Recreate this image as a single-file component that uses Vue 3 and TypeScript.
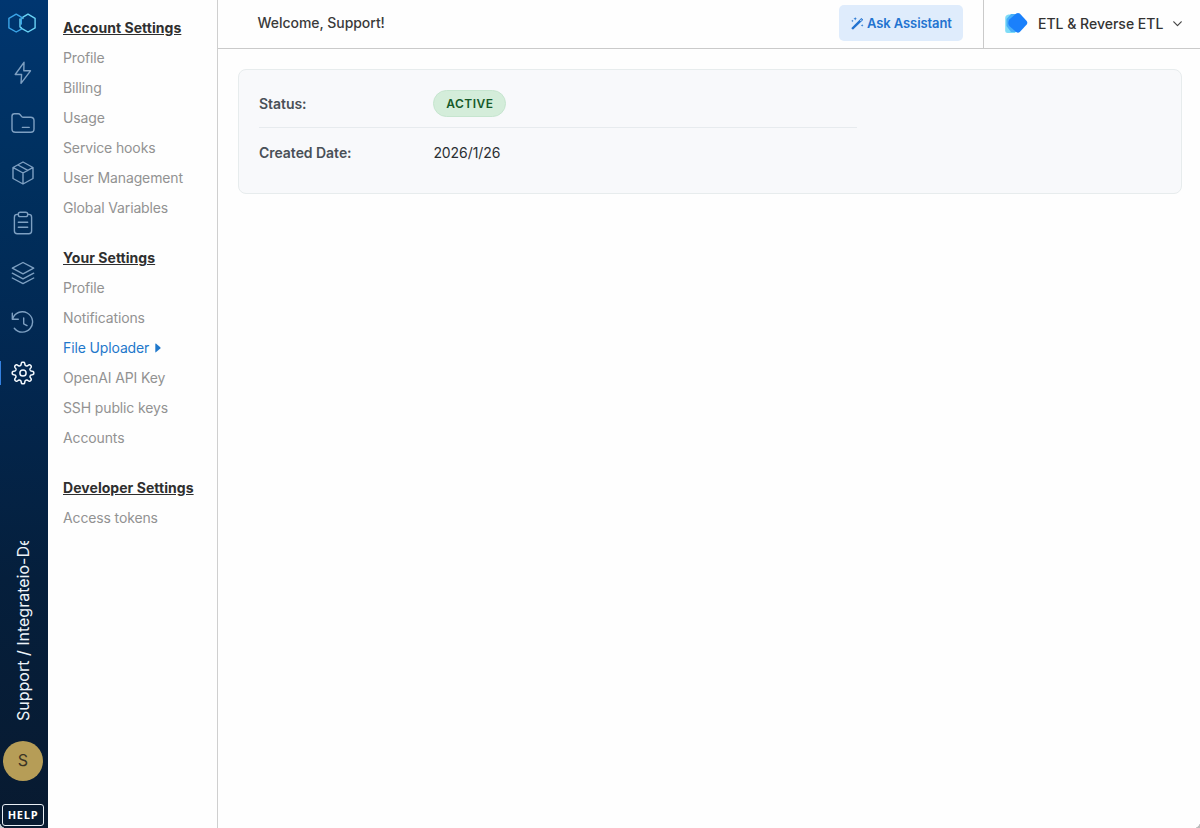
<script setup lang="ts">
interface MenuItem {
  label: string
  active?: boolean
}
interface MenuGroup {
  title: string
  items: MenuItem[]
}

const plain = (...labels: string[]): MenuItem[] => labels.map((label) => ({ label }))

const groups: MenuGroup[] = [
  {
    title: 'Account Settings',
    items: plain('Profile', 'Billing', 'Usage', 'Service hooks', 'User Management', 'Global Variables'),
  },
  {
    title: 'Your Settings',
    items: [
      ...plain('Profile', 'Notifications'),
      { label: 'File Uploader', active: true },
      ...plain('OpenAI API Key', 'SSH public keys', 'Accounts'),
    ],
  },
  { title: 'Developer Settings', items: plain('Access tokens') },
]

// Eight-lobed cog outline, centred in a 24 unit box.
const gearPath = (() => {
  const points: string[] = []
  for (let i = 0; i < 160; i++) {
    const angle = (i / 160) * Math.PI * 2
    const radius = 9.3 + 1.55 * Math.tanh(2 * Math.cos(8 * angle))
    points.push(`${(12 + radius * Math.sin(angle)).toFixed(2)} ${(12 - radius * Math.cos(angle)).toFixed(2)}`)
  }
  return `M${points.join('L')}Z`
})()

const navIcons: { name: string; path: string; active?: boolean }[] = [
  { name: 'Connections', path: 'M13 1.3L4.2 13.5H10.6L10 22.4L19.5 9.8H12.8Z' },
  {
    name: 'Packages',
    path: 'M1 5.2Q1 2.8 3.4 2.8H7.2Q8.4 2.8 9.2 3.7L10.5 5.4Q11.2 6.3 12.4 6.3H19.6Q23 6.3 23 9.5V18Q23 21.2 19.8 21.2H4.4Q1 21.2 1 18ZM11.4 16.4H18.2',
  },
  { name: 'Jobs', path: 'M12 1L22 6.5V17.5L12 23L2 17.5V6.5ZM2.3 6.7L12 12L21.7 6.7M12 12V22.5M7 4L16.8 9.4' },
  {
    name: 'Schedules',
    path: 'M7.3 3.4H6.2Q3.4 3.4 3.4 6.2V20Q3.4 22.7 6.2 22.7H17.8Q20.6 22.7 20.6 20V6.2Q20.6 3.4 17.8 3.4H16.7M9.3 1.2H14.7Q16.7 1.2 16.7 3.1V3.7Q16.7 5.6 14.7 5.6H9.3Q7.3 5.6 7.3 3.7V3.1Q7.3 1.2 9.3 1.2ZM7.3 11.3H16.7M7.3 16.3H16.7',
  },
  { name: 'Clusters', path: 'M12 1.5L22.7 7.2L12 12.8L1.3 7.2ZM1.3 12.2L12 17.8L22.7 12.2M1.3 17L12 22.6L22.7 17' },
  { name: 'History', path: 'M1.3 2.2V8.2H7.3M1.6 8A10.2 10.2 0 1 1 3.3 17.2M12.7 7V12.8L16 14.6' },
  { name: 'Settings', path: gearPath + 'M15.1 12A3.1 3.1 0 1 1 8.9 12A3.1 3.1 0 1 1 15.1 12Z', active: true },
]
</script>

<template>
  <div class="app">
    <nav class="rail">
      <svg class="logo" viewBox="0 0 28 20" width="28" height="20">
        <path d="M13.3 14.5V16.2L8.2 19L.9 14.9V5.3L8.2 1.1L13.3 4.2V11" stroke="#3ba5e8" />
        <path d="M14.9 5.5V4.2L20 1.1L27.1 5.3V14.9L20 19L14.9 16.2L12 14V6" stroke="#69d3f5" />
      </svg>
      <div class="nav-icons">
        <div v-for="icon in navIcons" :key="icon.name" class="nav-item" :class="{ active: icon.active }">
          <svg viewBox="0 0 24 24" width="24" height="24"><path :d="icon.path" /></svg>
        </div>
      </div>
      <div class="account"><span>Support / Integrateio-De</span></div>
      <div class="avatar">S</div>
      <div class="help">HELP</div>
      <i class="corner left"></i>
    </nav>

    <aside class="menu">
      <section v-for="group in groups" :key="group.title" class="group">
        <h2><span>{{ group.title }}</span></h2>
        <a v-for="item in group.items" :key="item.label" :class="{ active: item.active }">
          {{ item.label }}<svg v-if="item.active" viewBox="0 0 6 10" width="6" height="10"><path d="M.3 .9Q.3 .2 .9 .6L5.3 4.3Q5.8 5 5.3 5.6L.9 9.3Q.3 9.7 .3 9Z" /></svg>
        </a>
      </section>
    </aside>

    <main class="main">
      <header class="header">
        <div class="welcome">Welcome, Support!</div>
        <button class="assistant">
          <svg viewBox="0 0 14 14" width="13" height="13">
            <path d="M.7 11.7L10.6 1.5Q11.2 .9 11.8 1.5L12.7 2.4Q13.2 3 12.7 3.5L2.6 13.3Q2.1 13.8 1.5 13.3L.7 12.6Q.3 12.1 .7 11.7Z" />
            <path d="M9.7 3.9L10.4 4.6L11.7 3.2L11 2.5Z" fill="#dfecfc" />
            <path d="M4.5 0L5 1.4L6.4 1.9L5 2.4L4.5 3.8L4 2.4L2.6 1.9L4 1.4ZM1.5 2.9L1.9 3.9L2.9 4.3L1.9 4.7L1.5 5.7L1.1 4.7L.1 4.3L1.1 3.9ZM12 7.6L12.4 8.7L13.5 9.1L12.4 9.5L12 10.6L11.6 9.5L10.5 9.1L11.6 8.7Z" />
          </svg>
          <span>Ask Assistant</span>
        </button>
        <div class="product">
          <svg class="mark" viewBox="0 0 24 22" width="24" height="22">
            <path d="M4.5 2.5H11L17 11L11 21H3.5Q1.2 21 1.2 19V6Q1.2 3 4.5 2.5Z" fill="#7fdcf7" />
            <path d="M7 2L14 2V20L7 20L2.5 14V7Z" fill="#48aef8" />
            <path d="M12.2 1.6Q14 .3 15.8 1.6L22.7 9Q24 10.8 22.7 12.5L15.8 20Q14 21.3 12.2 20L5.3 14Q3.3 11 5.3 7.5Z" fill="#1a80fb" />
          </svg>
          <span>ETL &amp; Reverse ETL</span>
          <svg class="chevron" viewBox="0 0 9 6" width="9" height="6"><path d="M.8 .8L4.5 4.6L8.2 .8" /></svg>
        </div>
      </header>

      <section class="card">
        <div class="row divided">
          <span class="label">Status:</span>
          <span class="badge">ACTIVE</span>
        </div>
        <div class="row">
          <span class="label">Created Date:</span>
          <span class="value">2026/1/26</span>
        </div>
      </section>
      <i class="corner right"></i>
    </main>
  </div>
</template>

<style>
body {
  overflow: hidden;
  background: #fefefe;
}
</style>

<style scoped>
* {
  box-sizing: border-box;
}
.app {
  display: flex;
  width: 1200px;
  height: 828px;
  background: #fefefe;
  color: #333;
  font-family: Inter, "Liberation Sans", sans-serif;
  font-size: 14px;
}
.rail {
  position: relative;
  display: flex;
  flex-direction: column;
  flex: none;
  width: 48px;
  height: 828px;
  background: linear-gradient(#003670 0%, #00305f 20%, #022750 45%, #051f3c 70%, #081a30 100%);
}
svg path {
  stroke-linejoin: round;
  stroke-linecap: round;
}
.logo {
  flex: none;
  margin: 13px 0 0 8px;
  fill: none;
  stroke-width: 1.4;
}
.nav-icons {
  margin-top: 15px;
}
.nav-item {
  display: flex;
  align-items: center;
  height: 50px;
  padding-left: 11px;
  fill: none;
  stroke: #7ea0c2;
  stroke-width: 1.4;
}
.nav-item.active {
  position: relative;
  stroke: #f2f8fd;
  stroke-width: 1.5;
}
.nav-item.active::before {
  position: absolute;
  top: 13px;
  left: 0;
  width: 1px;
  height: 24px;
  background: #3480e0;
  content: "";
}
.account {
  height: 180px;
  margin: 143px 0 0 12px;
  width: 22px;
  overflow: hidden;
  color: #eef4f9;
  font-size: 16px;
  line-height: 22px;
  writing-mode: vertical-rl;
  transform: rotate(180deg);
  white-space: nowrap;
}
.avatar {
  width: 40px;
  height: 40px;
  margin: 20px 0 0 3px;
  border-radius: 50%;
  background: #b69d57;
  color: #3b3425;
  font-size: 16px;
  line-height: 39px;
  text-align: center;
}
.help {
  width: 42px;
  height: 22px;
  margin: 23px 0 0 2px;
  border: 1px solid #e8eef4;
  border-radius: 3px;
  color: #fff;
  font: 700 11px/20px "Open Sans", sans-serif;
  letter-spacing: 0.7px;
  text-align: center;
}
.corner {
  position: absolute;
  bottom: 0;
  width: 7px;
  height: 7px;
}
.corner.left {
  left: 0;
  background: radial-gradient(circle at 100% 0, transparent 7px, #c5cbd0 7.5px);
}
.corner.right {
  right: 0;
  background: radial-gradient(circle at 0 0, transparent 7px, #bcbcbc 7.5px);
}
.menu {
  flex: none;
  width: 170px;
  padding: 13px 0 0 15px;
  border-right: 1px solid #cfcfcf;
}
.group {
  margin-bottom: 20px;
}
.group h2,
.group a {
  display: flex;
  align-items: center;
  height: 30px;
  margin: 0;
  font-size: 14px;
  line-height: 30px;
  white-space: nowrap;
}
.group h2 {
  color: #2f2f2f;
  font-weight: 700;
  letter-spacing: 0.05px;
  text-decoration: underline;
}
.group a {
  color: #929292;
  letter-spacing: -0.13px;
}
.group a.active {
  color: #1f78cb;
}
.group a svg {
  margin-left: 6px;
  fill: #1f78cb;
}
.main {
  position: relative;
  flex: 1;
  min-width: 0;
}
.header {
  display: flex;
  height: 49px;
  padding-left: 39.5px;
  border-bottom: 1px solid #cacaca;
}
.welcome {
  flex: 1;
  color: #3a3a3a;
  font-weight: 500;
  letter-spacing: -0.04px;
  line-height: 46px;
}
.assistant {
  display: flex;
  align-items: center;
  gap: 3px;
  width: 124px;
  height: 36px;
  margin: 5px 20px 0 0;
  padding: 0 0 0 12px;
  border: 0;
  border-radius: 5px;
  background: #dfecfc;
  color: #2373d0;
  font: inherit;
  font-weight: 600;
  font-size: 13px;
  letter-spacing: -0.1px;
  white-space: nowrap;
}
.assistant svg {
  flex: none;
  fill: #2373d0;
}
.product {
  display: flex;
  align-items: center;
  width: 217px;
  padding: 0 0 2px 20px;
  border-left: 1px solid #cacaca;
  font-weight: 500;
  white-space: nowrap;
}
.mark {
  margin-right: 10px;
}
.chevron {
  margin: 1px 0 0 10px;
  fill: none;
  stroke: #444;
  stroke-width: 1.2;
}
.card {
  width: 944px;
  height: 125px;
  margin: 20px 0 0 20px;
  padding: 10px 20px;
  border: 1px solid #e7eced;
  border-radius: 8px;
  background: #f8f9fb;
}
.row {
  display: flex;
  align-items: center;
  width: 598px;
  height: 48px;
}
.row.divided {
  border-bottom: 1px solid #e7ebee;
}
.label {
  width: 174.4px;
  color: #495057;
  font-weight: 600;
  letter-spacing: -0.04px;
}
.value {
  color: #2b2f33;
  letter-spacing: -0.08px;
}
.badge {
  width: 73px;
  height: 27px;
  border: 1px solid #c6e5cf;
  border-radius: 14px;
  background: #d4edda;
  color: #175a29;
  font-size: 12px;
  font-weight: 600;
  letter-spacing: 0.45px;
  line-height: 25px;
  text-align: center;
}
</style>
